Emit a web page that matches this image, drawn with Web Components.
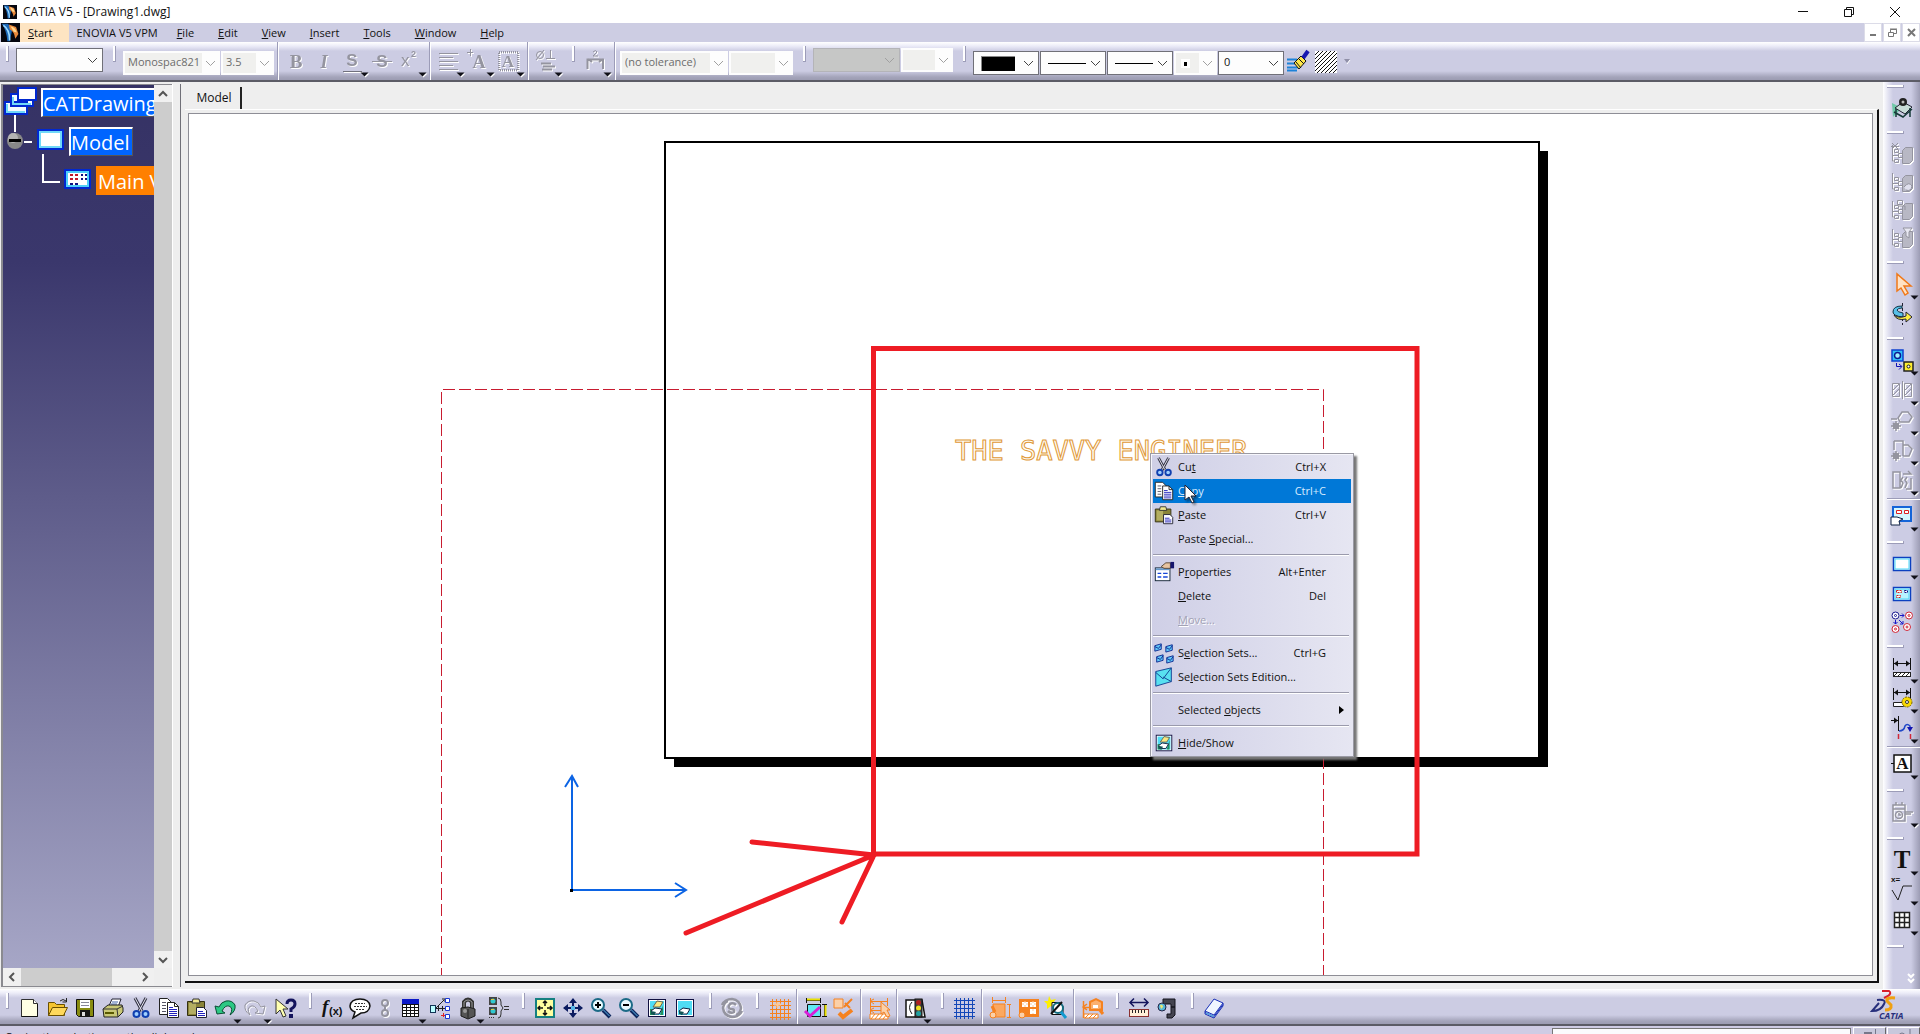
<!DOCTYPE html>
<html lang="en">
<head>
<meta charset="utf-8">
<title>CATIA V5 - [Drawing1.dwg]</title>
<style>
html,body{margin:0;height:100%;overflow:hidden}
body{font:11px/16px "Open Sans","Noto Sans",sans-serif;color:#111;background:#eee}
</style>
</head>
<body>
<cad-app></cad-app>
<script>
const ARROW = '<path d="M20.500 23.500h8l-4 4z" fill="#101018"/>';
const G = '#94949f', O = '#f58220';

function grid(c, x, y, n, s) {
  let d = '';
  for (let i = 0; i < n; i++) d += `M${x + i * s + .5} ${y - 2}v${(n - 1) * s + 5}M${x - 2} ${y + i * s + .5}h${(n - 1) * s + 5}`;
  return `<path d="${d}" stroke="${c}" fill="none"/>`;
}
const cube = extra => `<g fill="none" stroke="${G}"><path d="M12.500 8.500l3-3h7v13l-3 3h-7z" fill="#b8b8c4"/><path d="M4.500 7.500h4v3h-4zM8.500 11.500h4v4h-4zM4.500 17.500h4v3h-4zM2.500 3v16h2M2.500 13.500h6"/>${extra}</g>`;
const pic = (a, b) => `<rect x="3.500" y="3.500" width="17" height="17" fill="#fff" stroke="#101040"/><rect x="5" y="5" width="14" height="14" fill="#4fdcf4"/>${a}${b}`;
const eraser = '<path d="M6 15l4-3 7 1-3 5-6 0z" fill="#fff" stroke="#102040"/><path d="M6 15l5 1-2 3-3-1z" fill="#155"/>';
const lens = s => `<circle cx="9" cy="9" r="6" fill="#e8fbff" stroke="#1b6a86" stroke-width="2"/><path d="M14 14l7 7" stroke="#102a60" stroke-width="4"/><path d="M14.500 14l6 6" stroke="#5cb4e8"/><path d="${s}" stroke="#000" stroke-width="2"/>`;

const ICONS = {
  app:'<rect width="24" height="24" fill="#05060e"/><path d="M1 1h8l5 8-3 14H8Q7 9 1 1z" fill="#1c68b8"/><path d="M3 3q8 5 8 19" stroke="#9edcff" stroke-width="2" fill="none"/><path d="M10 2l9 3 3 9-4 6q-1-9-7-12z" fill="#e8873a"/><path d="M12 4q6 1 8 8l-4-1z" fill="#ffd890"/>',
  bold:`<text x="12" y="19" text-anchor="middle" font-family="Liberation Serif" font-size="19" font-weight="bold" fill="${G}">B</text>`,
  italic:`<text x="12" y="19" text-anchor="middle" font-family="Liberation Serif" font-size="18" font-style="italic" font-weight="bold" fill="${G}">I</text>`,
  under:`<text x="12" y="17" text-anchor="middle" font-family="Liberation Sans" font-size="17" font-weight="bold" fill="${G}">S</text><path d="M3 22.500h19" stroke="#70707c"/>`,
  strike:`<text x="12" y="18" text-anchor="middle" font-family="Liberation Sans" font-size="17" font-weight="bold" fill="${G}">S</text><path d="M2 12.500h20" stroke="${G}"/>`,
  sup:`<text x="3" y="17" font-family="Liberation Sans" font-size="17" fill="${G}">x</text><text x="13" y="8" font-family="Liberation Sans" font-size="9" font-weight="bold" fill="${G}">2</text>`,
  align:`<path d="M3 4.500h19M3 8.500h14M3 12.500h19M3 16.500h14M3 20.500h19" stroke="${G}"/>`,
  anchor:`<path d="M1 3.500h6M4.500 0v7" stroke="${G}"/><text x="13" y="19" text-anchor="middle" font-family="Liberation Serif" font-size="18" font-weight="bold" fill="${G}">A</text>`,
  frame:`<rect x="3" y="3" width="19" height="18" fill="none" stroke="${G}" stroke-width="2" stroke-dasharray="1 1"/><text x="12" y="18" text-anchor="middle" font-family="Liberation Serif" font-size="17" font-weight="bold" fill="${G}">A</text>`,
  symbol:`<g stroke="${G}" fill="none"><circle cx="6" cy="6" r="3.500"/><path d="M2 11L10 1M16.500 1v8M12 9.500h9"/><path d="M7 14.500h10M9 17.500h12M8 20.500h10" stroke-width="2"/></g>`,
  dimtype:`<g stroke="${G}" fill="none"><path d="M4.500 20v-9.500H20v9.500M5 10l4 3M20 10l-4 3" stroke-width="2"/><path d="M10 3q3-3 4 0l-4 4h5"/></g>`,
  brush:'<path d="M1 10.500h10M1 14.500h12M1 18.500h13M1 21.500h10" stroke="#1d82d8" stroke-width="2"/><path d="M8 14l7-7 5 5-7 8z" fill="#ffe84a" stroke="#101018"/><path d="M10 13l5 6M13 10l5 5" stroke="#101018"/><path d="M17 9l5-7" stroke="#1818b0" stroke-width="4"/>',
  hatch:'<rect x="1" y="2" width="22" height="22" fill="#fff"/><path d="M1 6l4-4M1 10l8-8M1 14L13 2M1 18L17 2M1 22L21 2M3 24L23 4M7 24L23 8M11 24l12-12M15 24l8-8M19 24l4-4" stroke="#111"/>',
  more:'<path d="M2 10h6l-3 4z" fill="#9090a8"/><path d="M8 11l-3 4" stroke="#fff"/>',
  new:'<path d="M4.500 3.500h12l4 4v13h-16z" fill="#ffffe4" stroke="#303030"/><path d="M16.500 3.500v4h4" fill="#fff" stroke="#303030"/><path d="M20.500 8v12.500h-16" stroke="#111" fill="none"/>',
  open:'<path d="M3.500 19.500v-13h6l2 2h8v11z" fill="#f4c430" stroke="#6a5000"/><path d="M3.500 19.500l4-8h15l-4 8z" fill="#ffd95c" stroke="#6a5000"/><path d="M15 5q3-3 6 0M21.500 2v4h-4" fill="none" stroke="#222"/>',
  save:'<path d="M3.500 3.500h17v17h-15l-2-2z" fill="#888c10" stroke="#111"/><rect x="7" y="4" width="10" height="8" fill="#fff"/><path d="M8 6.500h8M8 9.500h8" stroke="#889"/><path d="M7 14h10v7H7z" fill="#151515"/><path d="M9 16h3v4H9z" fill="#ddd"/>',
  print:'<path d="M8 10l3-7h9l-3 8z" fill="#fff" stroke="#223"/><path d="M11 6h6M10 8h6" stroke="#46a"/><path d="M2 13l5-4h14l1 3v4l-5 5H3z" fill="#c9c876" stroke="#222"/><path d="M2 13h14l6-3M16 13l1 8" fill="none" stroke="#333"/><path d="M4 17h9" stroke="#585800" stroke-width="2"/>',
  cut:'<path d="M6 2l7 13M17 2l-7 13" stroke="#334" stroke-width="3"/><path d="M6 2l7 13M17 2l-7 13" stroke="#e4e4f0"/><circle cx="7.500" cy="18" r="3" fill="#9fd0ff" stroke="#1040b0" stroke-width="2"/><circle cx="16.500" cy="18" r="3" fill="#9fd0ff" stroke="#1040b0" stroke-width="2"/>',
  copy:'<path d="M2.500 2.500h8l4 4v12h-12z" fill="#fff" stroke="#222"/><path d="M5 6.500h4M5 9.500h4M5 12.500h4M5 15.500h4" stroke="#556"/><path d="M10.500 6.500h7l4 4v11h-11z" fill="#fff" stroke="#222"/><path d="M17.500 6.500v4h4" fill="none" stroke="#222"/><path d="M12 11.500h4M12 13.500h8M12 15.500h8M12 17.500h8M12 19.500h8" stroke="#22b"/>',
  paste:'<path d="M2.500 5.500h17v14h-17z" fill="#8a8438" stroke="#333010"/><path d="M4 7h7v11H4z" fill="#b4ae62"/><path d="M7 7l1-4h6l1 4z" fill="#f0e890" stroke="#333"/><path d="M11.500 11.500h7l3 3v7h-10z" fill="#fff" stroke="#223"/><path d="M13 15.500h5M13 17.500h7M13 19.500h7" stroke="#22b"/>',
  undo:'<path d="M2 10l2 8 8-1-3-2q3-6 7-5 5 2 1 9 6-4 5-10-3-5-9-4-5 1-7 6z" fill="#2cc884" stroke="#0b4e34"/>',
  redo:`<path d="M22 10l-2 8-8-1 3-2q-3-6-7-5-5 2-1 9-6-4-5-10 3-5 9-4 5 1 7 6z" fill="none" stroke="${G}"/>`,
  help:'<path d="M3 3v15l4-4 3 7 3-1-3-7h5z" fill="#ffffb0" stroke="#333"/><path d="M14 8q0-4 4-4 4 0 4 4 0 3-4 5v3" fill="none" stroke="#14145c" stroke-width="3"/><rect x="16" y="18" width="4" height="4" fill="#14145c"/>',
  fx:'<text x="2" y="17" font-family="Liberation Serif" font-size="19" font-weight="bold" font-style="italic">f</text><text x="9" y="19" font-family="Liberation Sans" font-size="11" font-weight="bold">(x)</text>',
  note:'<path d="M12 3q9 0 10 7-1 7-9 7l-8 5 2-6q-5-2-5-6 1-7 10-7z" fill="#fff" stroke="#111" stroke-width="1.500"/><path d="M7 7.500h10M6 10.500h13M8 13.500h9" stroke="#333" stroke-dasharray="2 1"/>',
  chain:`<g fill="none" stroke="${G}" stroke-width="2"><circle cx="9" cy="7" r="3"/><circle cx="9" cy="17" r="3"/><path d="M9 9v6"/></g>`,
  table:`<rect x="4" y="3" width="17" height="18" fill="#fff"/><rect x="4" y="3" width="17" height="5" fill="#0a18c8"/><path d="M4.500 8v13M8.500 8v13M12.500 8v13M16.500 8v13M20.500 8v13M4 8.500h17M4 11.500h17M4 14.500h17M4 17.500h17M4 20.500h17" stroke="#111"/>`,
  branch:'<rect x="2.500" y="9.500" width="5" height="7" fill="#bff" stroke="#135"/><path d="M8 12l8-8M8 12.500h9M14 3h4M17 6v-3M10.500 10v5M14.500 10v5" stroke="#222" fill="none"/><path d="M13 19.500h4M15.500 17v4" stroke="#d22"/><g fill="#fff" stroke="#1838d8"><path d="M17.500 2.500h4v4h-4zM17.500 10.500h4v4h-4zM17.500 18.500h4v4h-4z"/></g>',
  lock:'<path d="M8 12V6q4-5 8 0v6" fill="none" stroke="#333" stroke-width="4"/><path d="M8 12V6q4-4 8 0v6" fill="none" stroke="#999"/><path d="M5 12l7-1 7 2v7l-7 3-7-3z" fill="#555" stroke="#1a1a1a"/><path d="M12 13v9" stroke="#222"/><circle cx="9" cy="15" r="2" fill="#999"/>',
  equiv:'<path d="M3 1h8v8H3zM3 11h8v8H3z" fill="#444"/><circle cx="7" cy="5" r="2.500" fill="#30c8d0"/><circle cx="7" cy="15" r="2.500" fill="#30c8d0"/><path d="M5 3h3v1H5zM5 13h3v1H5z" fill="#dc4"/><path d="M3 21.500h6" stroke="#333" stroke-dasharray="1 1"/><path d="M12 2q3 0 3 4v3l2 3-2 3v3q0 4-3 4M18 10.500h5M18 13.500h5" stroke="#333" fill="none"/>',
  fit:'<rect x="3" y="3" width="18" height="18" fill="#ffffa0" stroke="#158080" stroke-width="2"/><path d="M12 5v5M12 14v5M5 12h5M14 12h5M10 7l2-2 2 2M10 17l2 2 2-2M7 10l-2 2 2 2M17 10l2 2-2 2" stroke="#111" fill="none" stroke-width="1.500"/>',
  pan:'<path d="M12 3v18M3 12h18" stroke="#0c1c60" stroke-width="2"/><path d="M12 2l4 5H8zM12 22l4-5H8zM2 12l5-4v8zM22 12l-5-4v8z" fill="#0c1c60"/><rect x="10" y="10" width="4" height="4" fill="#58b8e8"/>',
  zin:lens('M6 9h6M9 6v6'), zout:lens('M6 9h6'),
  hide:pic('<path d="M8 11l4-6 6 1-3 5z" fill="#f8e880" stroke="#665"/><path d="M5 13h4l1 6H5zM18 9v10h-3z" fill="#258e5c"/>',eraser),
  swap:pic('',eraser),
  update:`<g fill="none" stroke="${G}" stroke-width="2.500"><path d="M2 9q3-6 10-6 8 1 9 9-1 6-5 7M22 15q-3 6-10 6-8-1-9-9 1-6 5-7"/><path d="M16 9q-3-3-6-1-3 4 1 5 4 0 3 3-3 2-6-1"/></g>`,
  ogrid:grid(O,5,5,5,4)+'<path d="M10.500 6v6M7 8.500h7" stroke="#fbc898" stroke-width="2"/>',
  bgrid:grid('#1448b8',4,4,5,4),
  measure:'<path d="M3.500 2v5M17.500 2v5M3 4.500h14M19 8.500h5M19 20.500h5M21.500 8v12" stroke="#111"/><path d="M4 3.500h13M22.500 9v11" stroke="#e8e000" stroke-width="2"/><path d="M4.500 8.500h13v12h-13z" fill="#60e8f4" stroke="#111"/><path d="M2 15l5 5L17 11" stroke="#d820d8" stroke-width="3" fill="none"/>',
  analysis:`<path d="M3 3h9v9H3z" fill="#fbd0a8" stroke="${O}"/><path d="M13 11l8-8M14 7l5 5" stroke="${O}" stroke-width="2"/><path d="M8 17l4 4 9-7" stroke="${O}" stroke-width="4" fill="none"/>`,
  snap:`<path d="M3.500 2v16M20.500 2v8M4 5.500h16M4 10.500h14M4 14.500h10" stroke="${O}"/><path d="M7 3l-4 2 4 3M7 12l-4 2 4 3" fill="none" stroke="${O}"/><path d="M3 18h18v5H3z" fill="#fff" stroke="${O}"/><path d="M4 23l4-5M8 23l4-5M12 23l4-5M16 23l4-5" stroke="${O}"/><path d="M14 6v12l3-2 3 5 3-1-3-6h3z" fill="#fbd0a8" stroke="${O}"/>`,
  light:'<path d="M3 4h16l3 17H3z" fill="#fff" stroke="#111" stroke-width="1.500"/><rect x="12" y="3" width="7" height="18" fill="#444" stroke="#111"/><circle cx="15.500" cy="6.500" r="2.500" fill="#b02020"/><circle cx="15.500" cy="12" r="2.500" fill="#f0e020"/><circle cx="15.500" cy="17.500" r="2.500" fill="#20a0a0"/><path d="M9 6q-5 5 0 12" stroke="#111" fill="none"/>',
  geo:`<path d="M4.500 1v6M17.500 1v6M4 4.500h13M19 8.500h4M19 21.500h4M21.500 8v13" stroke="${O}"/><path d="M5 8h12v13H5z" fill="#fba860" stroke="${O}"/><circle cx="5" cy="19" r="3" fill="#fbd0a8" stroke="${O}"/><path d="M4 10l3 6" stroke="${O}" stroke-width="3"/>`,
  views:`<path d="M3 3h20v18H3z" fill="${O}"/><path d="M6 6h6v5H6zM14 6h6v5h-6zM14 13h6v5h-6z" fill="#fff"/><path d="M6 8h14M9 5v6M17 5v13" stroke="#fbc898" stroke-dasharray="2 2"/><circle cx="6" cy="19" r="3" fill="#fbd0a8" stroke="${O}"/>`,
  detect:'<path d="M5 0l2 4 5-1-3 4 2 4-4-1-4 3V8L0 5h4z" fill="#fff000"/><path d="M8 6.500h8l3 4v8H8z" fill="#fff" stroke="#111"/><circle cx="14" cy="12" r="5" fill="none" stroke="#136c80" stroke-width="2"/><path d="M17 16l5 6" stroke="#139ad0" stroke-width="3"/><path d="M7 18L18 6" stroke="#111" stroke-width="2"/>',
  dimlock:`<path d="M3.500 5v17M4 11.500h8M7 8l-4 3 4 3" stroke="${O}" fill="none" stroke-width="1.500"/><path d="M10 6l6-3 6 3v8H10z" fill="#fbb070" stroke="${O}" stroke-width="2"/><path d="M13 9h5v3h-5z" fill="#fff"/><path d="M4 18h14v4H4z" fill="#fff" stroke="${O}"/><path d="M5 22l4-4M9 22l4-4M13 22l4-4" stroke="${O}"/><path d="M19 13l4 5" stroke="${O}" stroke-width="3"/>`,
  ruler:'<path d="M4 6.500h16M7 2.500l-4 4 4 4M17 2.500l4 4-4 4" stroke="#14145c" stroke-width="1.500" fill="none"/><rect x="2.500" y="13.500" width="19" height="7" fill="#fff0d8" stroke="#8a3030"/><path d="M5.500 14v3M8.500 14v3M11.500 14v3M14.500 14v3M17.500 14v3" stroke="#222"/>',
  caliper:'<path d="M8 3h12v8h-4V8H8zM16 11h4v8l-3 3h-5v-4h4z" fill="#444450" stroke="#15151c"/><circle cx="7" cy="11" r="4" fill="#58b8d8" stroke="#224"/><path d="M5 9q3-1 3 2l-2 2z" fill="#ece870"/>',
  catalog:'<path d="M3 15L12 3l9 4-9 12z" fill="#f0f6ff" stroke="#1830b8"/><path d="M3 15v3l9 4 9-12V7M3 16.500l9 4 9-12" fill="none" stroke="#1830b8"/><path d="M4 17l8 3.500" stroke="#50b8e8"/>',
  render:'<path d="M2 7l10 5-9 9z" fill="#70c8a8"/><path d="M5 12l8-6 9 5-7 7z" fill="#c8dcd8" stroke="#223"/><path d="M4 16l9 5 9-8M6 13v8M20 12v9" fill="none" stroke="#163a38" stroke-width="1.500"/><circle cx="13" cy="6" r="4" fill="#222"/><circle cx="13" cy="6" r="1.500" fill="#bbb"/>',
  c1:cube('<path d="M2 1l6 6M8 1L2 7M1 4.500h8"/>'),
  c2:cube('<path d="M14 17q5-6 8-1-1 6-6 4" fill="#e0e0ee"/>'),
  c3:cube('<path d="M7.500 2.500h5v4h-5zM9 8h6v4"/>'),
  c4:cube('<path d="M13 2h9l-3 4v6l-3-2V6z" fill="#e8e8f2"/>'),
  select:'<path d="M7 2v17l4-3 4 7 3-2-4-7h7z" fill="#ffe2c4" stroke="#f07818" stroke-width="1.500"/>',
  rotate:'<path d="M12.500 1v22" stroke="#223" stroke-dasharray="3 2"/><path d="M12 4Q3 4 3 10q0 4 10 5v-4q-6-1-6-3 1-2 5-2z" fill="#58c0e8" stroke="#134"/><path d="M4 13q5 4 12 1v-4l6 5-6 5v-3q-9 2-12-4z" fill="#ffee40" stroke="#223"/>',
  project:'<path d="M2 2h11v11H2z" fill="#30c0f8" stroke="#0c40d0" stroke-width="1.500"/><circle cx="7.500" cy="7.500" r="3" fill="#a0f0ff" stroke="#0c1890" stroke-width="1.500"/><rect x="14" y="14" width="9" height="9" fill="#ffee30" stroke="#222" stroke-width="1.500"/><circle cx="18.500" cy="18.500" r="1.500" stroke="#111" fill="#fff"/><path d="M6.500 15v3.500h5M9 16l3 2.500-3 3" stroke="#1010b8" fill="none"/>',
  section:`<g fill="none" stroke="${G}"><path d="M2.500 5.500h7v13h-7zM14.500 5.500h7v13h-7zM12.500 3v18M2 13l7-7M2 18l7-7M14 13l7-7M14 18l7-7"/></g>`,
  detail:`<g fill="none" stroke="${G}" stroke-width="1.500"><path d="M1 11h6M10 14L8 10l4-6h6l4 5-3 5h-6z"/><circle cx="6" cy="18" r="2.500"/><path d="M6 13v10M1 18h10M3 15l6 6M9 15l-6 6"/></g>`,
  clip:`<g fill="none" stroke="${G}" stroke-width="1.500"><path d="M4 3h9v15M4 3v9M13 7h5l4 4-3 7h-6" /><circle cx="6" cy="18" r="2.500"/><path d="M6 13v10M1 18h10M3 15l6 6M9 15l-6 6"/></g>`,
  broken:`<g fill="none" stroke="${G}" stroke-width="1.500"><path d="M3 4h7v16H3zM13 9l-2 3 2 3-2 5M17 9l-2 3 2 3-2 5M13 6h8l-3-3M21 10v11h-5"/></g>`,
  wizard:'<rect x="3" y="3" width="18" height="14" fill="#d4f8ff" stroke="#1464d8" stroke-width="2"/><path d="M6.500 6.500h5v3h-5zM14.500 6.500h4v3h-4z" fill="#fff" stroke="#d22"/><path d="M1 13h6l6 2-4 2 1 4H1z" fill="#fff" stroke="#124"/>',
  sheet:'<rect x="3.500" y="5.500" width="17" height="13" fill="#fff" stroke="#0c40c0" stroke-width="1.500"/><rect x="5" y="7" width="14" height="10" fill="#fff" stroke="#48d8f8"/>',
  view:'<rect x="3.500" y="5.500" width="17" height="13" fill="#fff" stroke="#0c40c0" stroke-width="1.500"/><rect x="5" y="7" width="14" height="10" fill="#b8f4ff" stroke="#48d8f8"/><path d="M6.500 8.500h5v2h-5zM6.500 13.500h4v2h-4z" fill="#fff" stroke="#c22" stroke-dasharray="2 1"/><path d="M14.500 8.500h3v2h-3z" fill="#fff" stroke="#118" stroke-dasharray="2 1"/>',
  instance:'<g fill="#fff" stroke-width="1"><circle cx="5.500" cy="5.500" r="3.500" stroke="#1a1a90"/><circle cx="19" cy="5.500" r="3.500" stroke="#d02838"/><circle cx="17" cy="17" r="3.500" stroke="#d02838"/><circle cx="5.500" cy="19" r="3.500" stroke="#d02838"/></g><g fill="none" stroke="#d02838"><circle cx="19" cy="5.500" r="1"/><circle cx="17" cy="17" r="1"/><circle cx="5.500" cy="19" r="1"/><circle cx="5.500" cy="5.500" r="1" stroke="#1a1a90"/></g><path d="M10 5.500h4M12 3.500l2 2-2 2M5.500 10v4M3.500 12l2 2 2-2M9 10l4 4v-3M13 14h-3" stroke="#1818c8" fill="none"/>',
  dim:'<path d="M3.500 2v12M20.500 2v12M4 7.500h16" stroke="#111" fill="none"/><path d="M4 7.500l4-3v6zM20 7.500l-4-3v6z"/><rect x="3.500" y="16.500" width="17" height="4" fill="#fff" stroke="#222"/><path d="M4 20l3-3M8 20l3-3M12 20l3-3M16 20l3-3" stroke="#222"/>',
  dimgear:'<path d="M3.500 2v12M20.500 2v12M4 6.500h16" stroke="#111" fill="none"/><path d="M4 6.500l4-3v6zM20 6.500l-4-3v6z"/><path d="M3.500 16.500h10v4h-10z" fill="#fff" stroke="#222"/><circle cx="17" cy="16" r="5" fill="#f8d800" stroke="#7a6400" stroke-dasharray="2 1"/><circle cx="17" cy="16" r="1.500" fill="#fff" stroke="#333"/>',
  feature:'<path d="M1 4.500h7M8.500 0v15" stroke="#111" fill="none"/><path d="M8 4.500l-4-3v6z"/><path d="M9 15q5 0 6-5 2-3 5 0v3" stroke="#2048c8" stroke-width="1.500" fill="none"/><path d="M17 11h6l-3 5z" fill="#1414b0"/><path d="M8.500 18v5M20.500 18v5" stroke="#d02838" stroke-width="1.500"/>',
  datum:'<rect x="4" y="3" width="17" height="17" fill="#fff" stroke="#111" stroke-width="1.500"/><path d="M1 11.500h3" stroke="#111"/><text x="12.500" y="17" text-anchor="middle" font-family="Liberation Serif" font-size="17" font-weight="bold">A</text>',
  weld:`<g fill="none" stroke="${G}" stroke-width="1.500"><path d="M3 5h12v4H3zM3 9v12h12V9M15 12h8M15 14h6"/><circle cx="9" cy="15" r="3.500"/><path d="M9 13v2h2M6 2v3M12 2v3"/></g>`,
  text:'<text x="12" y="20" text-anchor="middle" font-family="Liberation Serif" font-size="25" font-weight="bold">T</text>',
  rough:'<text x="1" y="4" font-family="Liberation Sans" font-size="8" font-weight="bold">x=</text><path d="M2 12l6 10 5-14h9" fill="none" stroke="#222"/>',
  tbl:'<rect x="4" y="4" width="16" height="16" fill="#fff"/><path d="M4.500 4.500h15v15h-15zM9.500 4v16M14.500 4v16M4 9.500h16M4 14.500h16" stroke="#222" fill="none" stroke-width="1.500"/>',
  props:'<rect x="2.500" y="7.500" width="16" height="14" fill="#fff" stroke="#123"/><path d="M3 9h15" stroke="#69c" stroke-width="2"/><path d="M5 13.500h4M11 13.500h5M5 17.500h4M11 17.500h5" stroke="#1848d8" stroke-width="1.500"/><path d="M9 6l5-4h5v6h-7z" fill="#e8c4a0" stroke="#543"/><path d="M19 1h4v7h-4z" fill="#15156c"/>',
  sets:[[2,3],[14,4],[4,15],[15,16]].map(([x,y])=>`<path d="M${x} ${y+1}l7-2v6l-7 2z" fill="#60c8f8" stroke="#0c2890"/><path d="M${x} ${y+2}l4 2 3-4" fill="none" stroke="#0c2890"/>`).join(''),
  setedit:'<path d="M3 6l17-4v15L3 22z" fill="#58e0f0" stroke="#103c90"/><path d="M3 7l8 7 9-12M11 12l9 5" fill="none" stroke="#103c90"/>'
};
const svg = (name, extra = '', size = 24) => `<svg class="ic" width="${size}" height="${size}" viewBox="0 0 24 24" fill="#111" aria-hidden="true">${ICONS[name] || ''}${extra}</svg>`;

class Base extends HTMLElement {
  connectedCallback() {
    if (this.shadowRoot) return;
    this.attachShadow({ mode: 'open' }).innerHTML =
      `<style>*{box-sizing:border-box}button{font:inherit;color:inherit;border:0;background:none;padding:0;margin:0}svg{display:block;overflow:visible;flex:none}${this.css()}</style>${this.html()}`;
  }
  at(n, d = '') { return this.getAttribute(n) ?? d; }
}
const define = (name, css, html) => customElements.define(name, class extends Base {
  css() { return css; }
  html() { return html(this); }
});

define('cad-tool', `
  :host{display:flex;flex:none;align-items:center;justify-content:flex-start}
  button{display:flex;padding:0 2px}
  button:disabled .ic{filter:drop-shadow(1px 1px 0 #fff)}`,
  e => `<button aria-label="${e.at('label', e.at('icon'))}" ${e.hasAttribute('off') ? 'disabled' : ''}>${svg(e.at('icon'), e.hasAttribute('drop') ? ARROW : '')}</button>`);

define('cad-grip', `
  :host{display:flex;flex:none}
  i{display:block;background:#fff;border:0 solid #9c9cb8}
  :host(:not([v])){width:19px;padding:4px 0 0 10px}
  :host(:not([v])) i{width:3px;height:16px;border-width:0 1px 1px 0}
  :host([v]){height:18px;padding:9px 0 0 4px}
  :host([v]) i{width:17px;height:3px;border-width:0 1px 1px 0}`, () => '<i></i>');

define('cad-rule', `
  :host{display:block;flex:none}
  :host(:not([v])){width:8px;padding-left:3px;align-self:stretch}
  :host(:not([v])) i{width:2px;height:100%;border-left:1px solid #9c9cb8}
  :host([v]){height:6px;padding:2px 0 0 4px}
  :host([v]) i{height:2px;border-top:1px solid #9c9cb8}
  i{display:block;background:#fff}`, () => '<i></i>');

define('cad-combo', `
  :host{display:grid;flex:none;height:24px;margin:9px 0 0 1px;align-self:flex-start;background:#fdfdfd}
  :host([high]){margin-top:6px}
  :host([edge]){border:1px solid #707078}
  :host([dark]){background:#c6c7c6;border:1px solid #b4b4b8}
  :host([off]){color:#6c6c6c}
  select,svg,.art{grid-area:1/1}
  select{appearance:none;width:100%;height:100%;min-width:0;border:0;border-radius:0;background:none;color:inherit;font:inherit;opacity:1;padding:0 20px 2px 5px;margin:0;outline:0}
  :host([fill]) select{background:linear-gradient(#f0f0ee,#f0f0ee) 2px 2px/calc(100% - 20px) calc(100% - 4px) no-repeat}
  svg{justify-self:end;align-self:center;margin-right:4px;pointer-events:none}
  .art{justify-self:start;align-self:center;margin:0 0 0 7px}`,
  e => `<select aria-label="${e.at('label')}" ${e.hasAttribute('off') ? 'disabled' : ''}><option>${e.at('value')}</option></select>${
    { swatch:'<svg class="art" width="34" height="15"><path d="M0 0h34v15H0z" fill="#888"/><path d="M1 1h33v14H1z"/></svg>',
      line:'<svg class="art" width="38" height="1"><path d="M0 0h38v1H0z"/></svg>',
      dot:'<svg class="art" width="9" height="9"><path d="M0 0h9v9H0z" fill="#fff"/><path d="M3 3h3v4H3z"/></svg>' }[e.at('art')] || ''
    }<svg width="11" height="7" fill="none" stroke="${e.hasAttribute('off') ? '#a0a0a0' : '#444'}"><path d="M1 1l4.500 4.500L10 1"/></svg>`);

define('cad-bar', `
  :host{display:flex;min-width:0;min-height:0;overflow:hidden}
  :host(:not([v])){background:linear-gradient(#fff 0,#ececf8 4px,#cccce3 9px,#cccce3 calc(100% - 9px),#a4a4ba calc(100% - 3px),#9c9cb2);border-bottom:2px solid #5c5c66}
  :host([v]){flex-direction:column;background:linear-gradient(90deg,#fff 0,#e4e4f2 5px,#cccce4 10px,#cccce4 calc(100% - 9px),#9c9cb4)}
  ::slotted(cad-tool){width:28px}
  ::slotted(cad-tool[drop]){width:30px}
  ::slotted(cad-tool[icon=chain]){width:22px}
  ::slotted(cad-grip:first-child:not([v])){margin-left:-4px}
  ::slotted(cad-grip[v]:first-child){margin-top:-6px}
  :host([v]) ::slotted(cad-tool){width:auto;height:28px;padding:0 0 0 5px}
  :host([v]) ::slotted(cad-tool[drop]){height:30px;padding-bottom:2px}`, () => '<slot></slot>');

define('cad-title', `
  :host{display:flex;align-items:center;height:23px;background:#fff;padding-left:3px;font-size:12px}
  span{margin:0 auto 0 6px;color:#111}
  button{width:46px;height:22px;display:grid;place-items:center}
  button:last-child{margin-right:2px}`,
  () => `${svg('app','',14)}<span>CATIA V5 - [Drawing1.dwg]</span>
  <button aria-label="Minimize"><svg width="12" height="12" stroke="#111" fill="none"><path d="M1 5.500h10"/></svg></button>
  <button aria-label="Restore"><svg width="12" height="12" stroke="#111" fill="none"><path d="M1.500 3.500h7v7h-7zM3.500 3V1.500h7v7H9"/></svg></button>
  <button aria-label="Close"><svg width="12" height="12" stroke="#111" fill="none"><path d="M1 1l10 10M11 1L1 11"/></svg></button>`);

define('cad-menubar', `
  :host{display:flex;height:19px;background:#cdcde3;padding-left:1px}
  .items{display:flex;margin-right:auto}
  .items button{padding:0 12px;height:19px}
  .items button.on{background:#fde4c2;padding:0 16px 0 8px;margin-right:-4px}
  .items button.tight{padding-right:7px}
  .win{display:flex;gap:1px}
  .win button{width:18px;background:#fff;border:1px solid #dcdce8;display:grid;place-items:center}`,
  () => `${svg('app','',19)}<div class="items">${
    [['<u>S</u>tart','on'],['ENOVIA V5 VPM','tight'],['<u>F</u>ile'],['<u>E</u>dit'],['<u>V</u>iew'],['<u>I</u>nsert'],['<u>T</u>ools'],['<u>W</u>indow'],['<u>H</u>elp']]
    .map(([t,c=''])=>`<button class="${c}">${t}</button>`).join('')}</div><div class="win">
    <button aria-label="Minimize drawing"><svg width="8" height="8"><path d="M1 5h6v2H1z" fill="#777"/></svg></button>
    <button aria-label="Restore drawing"><svg width="9" height="9" fill="none" stroke="#777"><path d="M.5 4.500h5v4h-5zM2.500 4V1.500h6v4H6M2 1h7"/></svg></button>
    <button aria-label="Close drawing"><svg width="9" height="9" stroke="#777" stroke-width="2"><path d="M1 1l7 7M8 1L1 8"/></svg></button></div>`);

define('cad-scroll', `
  :host{display:flex;background:#f0f0f0}
  :host([v]){flex-direction:column}
  button{width:18px;height:17px;display:grid;place-items:center;flex:none}
  .track{flex:1;display:flex}
  :host([v]) .track{flex-direction:column}
  .thumb{background:#cdcdcd;flex:0 0 var(--len,100%)}`,
  e => { const v = e.hasAttribute('v');
    const a = d => `<svg width="10" height="10" fill="none" stroke="#555" stroke-width="2"><path d="${d}"/></svg>`;
    return `<button aria-label="Scroll back">${a(v ? 'M1 7l4-4 4 4' : 'M7 1L3 5l4 4')}</button><div class="track"><div class="thumb"></div></div><button aria-label="Scroll on">${a(v ? 'M1 3l4 4 4-4' : 'M3 1l4 4-4 4')}</button>`; });

define('cad-tree', `
  :host{display:grid;grid-template:minmax(0,1fr) 18px/minmax(0,1fr) 18px;min-height:0;border:solid #8a8a90;border-width:1px 0 1px 2px;margin:1px 10px 2px 1px;box-shadow:1px 0 #fff,8px 0 #eee,9px 0 #707078}
  .view{overflow:hidden;background:linear-gradient(#353264,#3a376c 20%,#a6a6c6);display:flex;flex-direction:column;gap:10px;padding:3px 0 0}
  .row{display:flex;height:29px;align-items:center;font-size:20px;line-height:29px;color:#fff;white-space:nowrap}
  .label{height:29px;padding:0 2px 0 0;background:#0064ff;border:solid;border-width:2px 1px 1px 2px;border-color:#fff #555 #555 #fff;line-height:27px}
  .label.hot{background:#ff8000;border-color:#ff8000}
  cad-scroll[v]{--len:100%}
  cad-scroll.h{--len:79%}`,
  () => `<div class="view">
    <div class="row"><svg width="38" height="29" fill="none"><path d="M12 26v18" stroke="#fff" stroke-width="2"/><path d="M2 14h22v12H2zM8 6h22v12H8z" fill="#f4fcff" stroke="#0028d0" stroke-width="2"/><path d="M4 16v8h18M10 9v7h18" stroke="#70d8f8" stroke-width="2"/><path d="M15 0h18v12H15z" fill="#fff" stroke="#0028d0" stroke-width="2"/></svg><span class="label">CATDrawing1</span></div>
    <div class="row"><button aria-label="Collapse Model"><svg width="31" height="29"><circle cx="12" cy="14" r="8" fill="#888"/><circle cx="10" cy="11" r="5" fill="#b4b4b4"/><path d="M6 12h12v3H6z"/><path d="M21 14h8v2h-8z" fill="#fff"/></svg></button><svg width="35" height="29" fill="none"><rect x="4" y="3" width="25" height="19" fill="#fff" stroke="#0028d0" stroke-width="2"/><rect x="6" y="5" width="21" height="15" stroke="#70d8f8" stroke-width="2"/><path d="M9 27v28h17" stroke="#fff" stroke-width="2"/></svg><span class="label">Model</span></div>
    <div class="row"><svg width="93" height="29" fill="none"><rect x="62" y="4" width="25" height="18" fill="#fff" stroke="#0028d0" stroke-width="2"/><rect x="64" y="6" width="21" height="14" stroke="#50d0f8" stroke-width="2"/><path d="M67 8h3v2h-3zM72 8h3v2h-3zM67 12h3v2h-3zM72 12h3v2h-3z" fill="#c01828"/><path d="M78 8h2v2h-2zM82 8h2v2h-2zM78 12h2v2h-2zM82 12h2v2h-2zM67 17h3v2h-3zM72 17h3v2h-3z" fill="#101080"/></svg><span class="label hot">Main View</span></div>
  </div><cad-scroll v></cad-scroll><cad-scroll class="h"></cad-scroll>`);

define('cad-drawing', `
  :host{display:block;overflow:hidden;background:#fff;min-width:0;min-height:0}
  svg{width:100%;height:100%}
  text{font:27px "DejaVu Sans Mono",monospace;fill:#fffdf4;stroke:#e09838;stroke-width:1px}`,
  () => `<svg fill="none"><g transform="translate(-189,-114)">
    <path d="M674 758h865V151h9v616H674z" fill="#000"/><rect x="665" y="142" width="874" height="616" stroke="#000" stroke-width="2"/>
    <text x="955" y="460">THE SAVVY ENGINEER</text>
    <path d="M441.500 980V389.500H1323.500V980" stroke="#c81c30" stroke-dasharray="12 4"/>
    <path d="M572 890V777M572 890h113M565 787l7-11 6 11M675 883l11 7-11 7" stroke="#0c64e4" stroke-width="2"/><rect x="570" y="889" width="3" height="3" fill="#000"/>
    <g stroke="#ee1c24" stroke-width="5" stroke-linecap="round"><path d="M873.500 348.500H1417V854H873.500z"/><path d="M686 933L874 855M752 842l122 13M842 922l32-67"/></g></g></svg>`);

define('cad-doc', `
  :host{display:flex;flex-direction:column;min-width:0;min-height:0;background:#eee;padding:2px 4px 6px 3px}
  .tabs{display:flex;height:24px;padding-left:3px}
  .tabs button{width:54px;border-right:2px solid #222;margin-top:2px;font-size:12px}
  .frame{flex:1;display:grid;min-height:0;border:solid #111;border-width:0 2px 2px 0;border-top:1px solid #fff;padding:3px 4px 5px 3px}
  .frame>cad-drawing{border:1px solid #8e8e96}`,
  () => `<div class="tabs" role="tablist"><button role="tab" aria-selected="true">Model</button></div><div class="frame"><cad-drawing></cad-drawing></div>`);

define('cad-menu', `
  :host{position:absolute;left:1150px;top:453px;width:204px;border:1px solid #9a9aa4;padding:1px 2px;background:linear-gradient(90deg,#cfcfe6,#e6e6f2);box-shadow:inset 1px 1px #f6f6fc,3px 3px 2px #777}
  button{display:flex;width:100%;height:24px;align-items:center;text-align:left}
  .ico{width:25px;flex:none}
  .key{margin:0 25px 0 auto}
  .sub{margin:0 7px 0 auto}
  .on{background:#0078d7;color:#d8ecff}
  button:disabled{color:#a2a2b4;text-shadow:1px 1px #fff}
  hr{margin:3px 2px 4px 0;border:0;height:2px;background:#fff;border-top:1px solid #9a9aac}
  .cursor{position:absolute;left:33px;top:30px;filter:drop-shadow(2px 2px 1px #0006)}`,
  () => [
    ['Cu<u>t</u>','cut','Ctrl+X'],['<u>C</u>opy','copy','Ctrl+C','on'],['<u>P</u>aste','paste','Ctrl+V'],['Paste <u>S</u>pecial...'],0,
    ['P<u>r</u>operties','props','Alt+Enter'],['<u>D</u>elete','','Del'],['<u>M</u>ove...','','','','disabled'],0,
    ['S<u>e</u>lection Sets...','sets','Ctrl+G'],['Se<u>l</u>ection Sets Edition...','setedit'],0,
    ['Selected <u>o</u>bjects','','','sm'],0,['<u>H</u>ide/Show','hide']
  ].map(r => r ? `<button class="${r[3]||''}" ${r[4]||''}><span class="ico">${r[1] ? svg(r[1],'',22) : ''}</span><span>${r[0]}</span>${r[2] ? `<span class="key">${r[2]}</span>` : ''}${r[3]==='sm' ? '<svg class="sub" width="5" height="8"><path d="M0 0l5 4-5 4z"/></svg>' : ''}</button>` : '<hr>').join('')
  + '<svg class="cursor" width="14" height="20"><path d="M1 1v15l4-3 3 6 2-1-3-6h5z" fill="#fff" stroke="#223"/></svg>');

define('cad-logo', `:host{display:block;margin-left:auto;padding-right:7px}`,
  () => `<svg width="42" height="34" fill="none" role="img" aria-label="DS CATIA"><path d="M11 2h7q3 2-1 5l-4 2" stroke="#d8202c" stroke-width="2"/><path d="M6 11q10-1 7 4-3 7-12 7l7-8" stroke="#28307c" stroke-width="2"/><path d="M24 9q-9-1-8 3l4 4q1 5-6 5" stroke="#f0a010" stroke-width="3"/><text x="8" y="30" font-family="Open Sans" font-size="9" font-weight="bold" font-style="italic" fill="#28307c">CATIA</text></svg>`);

define('cad-status', `
  :host{display:flex;height:8px;overflow:hidden;background:#cfcce4;padding-left:5px}
  span{margin-right:auto;padding-top:3px}
  input{width:299px;height:22px;margin:2px 1px 0 0;border:1px solid #777;background:#fbfbfd;padding:0}
  button{width:33px;height:22px;margin:1px 0 0 1px;border:1px solid #777;border-color:#fff #666 #666 #fff;background:#c8c8dc;display:grid;justify-items:center}`,
  () => `<span>Copies the selection on the clipboard</span><input aria-label="Power input"><button aria-label="Power input mode"><svg width="16" height="10"><path d="M2 4h8v6H2zM13 1h1v9h-1z" fill="#77778a"/></svg></button><button aria-label="Prompt"><svg width="16" height="10" fill="none" stroke="#77778a"><path d="M1 9q5-8 10 0M14 1v9"/></svg></button>`);

const T = (s, v) => s.trim().split(/\s+/).map(t => {
  if (t === '|') return `<cad-grip ${v}></cad-grip>`;
  if (t === '/') return `<cad-rule ${v}></cad-rule>`;
  return `<cad-tool icon="${t.replace(/[+!]/g, '')}" ${t.includes('+') ? 'drop' : ''} ${t.includes('!') ? 'off' : ''}></cad-tool>`;
}).join('');
const C = (w, label, value, attrs) => `<cad-combo style="width:${w}px" label="${label}" value="${value}" ${attrs}></cad-combo>`;

define('cad-app', `
  :host{display:grid;height:100vh;grid-template:23px 19px 40px minmax(0,1fr) 37px 8px/minmax(0,1fr) 37px;overflow:hidden}
  cad-title,cad-menubar,.top,.bottom,cad-status{grid-column:1/-1}
  .work{display:grid;grid-template-columns:182px minmax(0,1fr);min-height:0;background:#eee;padding-top:1px}
  .bottom cad-tool{padding-top:2px}
  .exp{margin:auto 5px 6px auto}`,
  () => `<cad-title></cad-title><cad-menubar></cad-menubar>
  <cad-bar class="top">${T('|','')}${C(87,'Style','','high edge')}${T('|','')}${C(97,'Font name','Monospac821','off fill')}${C(53,'Font size','3.5','off fill')}${
    T('/ bold! italic! under!+ strike! sup!+ / align!+ anchor!+ frame!+ / symbol!+ | dimtype!+ /','')}${C(108,'Tolerance','(no tolerance)','off fill')}${C(64,'Tolerance value','','off fill')}${
    T('|','')}${C(87,'Number format','','off dark high')}${C(52,'Precision','','off fill high')}${T('|','')}${C(66,'Color','','edge art="swatch"')}${C(66,'Thickness','','edge art="line"')}${C(66,'Line type','','edge art="line"')}${C(43,'Point symbol','','off fill art="dot"')}${C(66,'Layer','0','edge')}${T('brush hatch more','')}</cad-bar>
  <div class="work"><cad-tree></cad-tree><cad-doc></cad-doc></div>
  <cad-bar v class="side">${T('| render | c1! c2! c3! c4! | select+ rotate | project+ section!+ detail!+ clip!+ broken!+ / wizard+ | sheet+ view instance | dim+ dimgear+ feature+ / datum+ | weld!+ | text+ rough+ tbl+ |','v')}<svg class="exp" width="8" height="10" fill="none" stroke="#fff" stroke-width="2"><path d="M1 1l3 3 3-3M1 6l3 3 3-3"/></svg></cad-bar>
  <cad-bar class="bottom">${T('| new open save print cut copy paste undo+ redo!+ help | fx note chain! table+ branch lock+ equiv | fit pan zin zout hide swap | update! | ogrid / measure analysis / snap / light+ | bgrid / geo views detect / dimlock | ruler caliper | catalog','')}<cad-logo></cad-logo></cad-bar>
  <cad-status></cad-status><cad-menu></cad-menu>`);
</script>
</body>
</html>
